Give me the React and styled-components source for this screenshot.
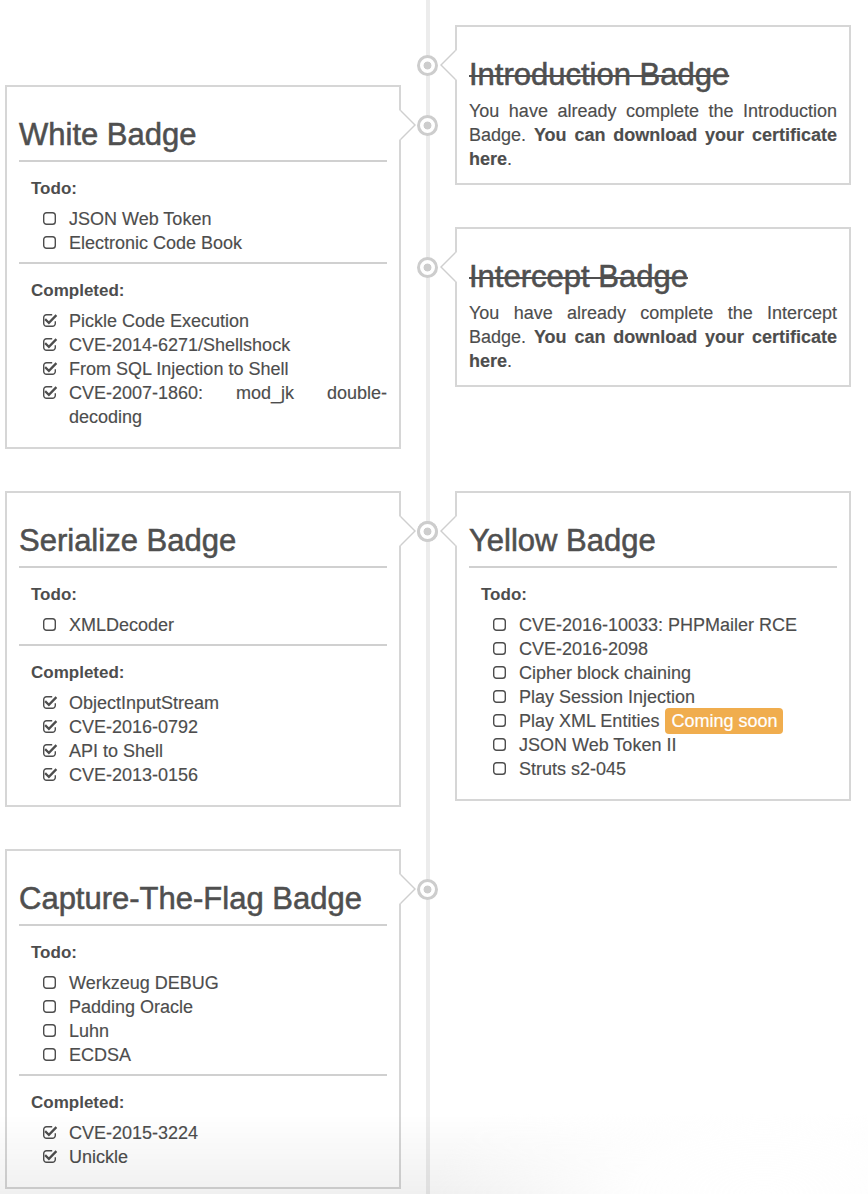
import React from "react";
import styled, { createGlobalStyle, css } from "styled-components";

const Global = createGlobalStyle`
  html, body { margin: 0; padding: 0; background: #fff; }
  body {
    font-family: "Liberation Sans", Arial, Helvetica, sans-serif;
    color: #4d4d4d;
  }
`;

const Page = styled.main`
  display: grid;
  grid-template-columns: 396px 54px 396px;
  align-items: start;
  padding-left: 5px;
  min-height: 100vh;
  box-sizing: border-box;
`;

const Column = styled.div`
  display: flex;
  flex-direction: column;
  gap: 42px;
  padding-top: ${(p) => p.$top}px;
  padding-bottom: 5px;
`;

const Spine = styled.div`
  align-self: stretch;
  background: linear-gradient(
    to right,
    transparent 25px,
    #ececec 25px,
    #ececec 29px,
    transparent 29px
  );
`;

const arrowLeftSide = css`
  &::before {
    content: "";
    position: absolute;
    top: 23px;
    right: -17px;
    border-top: 15px solid transparent;
    border-bottom: 15px solid transparent;
    border-left: 15px solid #cfcfcf;
  }
  &::after {
    content: "";
    position: absolute;
    top: 23px;
    right: -15px;
    border-top: 15px solid transparent;
    border-bottom: 15px solid transparent;
    border-left: 15px solid #fff;
  }
`;

const arrowRightSide = css`
  &::before {
    content: "";
    position: absolute;
    top: 23px;
    left: -17px;
    border-top: 15px solid transparent;
    border-bottom: 15px solid transparent;
    border-right: 15px solid #cfcfcf;
  }
  &::after {
    content: "";
    position: absolute;
    top: 23px;
    left: -15px;
    border-top: 15px solid transparent;
    border-bottom: 15px solid transparent;
    border-right: 15px solid #fff;
  }
`;

const Card = styled.article`
  position: relative;
  box-sizing: border-box;
  width: 396px;
  border: 2px solid #d6d6d6;
  background: #fff;
  padding: 31px 12px 11px;
  margin-top: ${(p) => p.$push || 0}px;
  ${(p) => (p.$side === "left" ? arrowLeftSide : arrowRightSide)}
`;

const Node = styled.span`
  position: absolute;
  top: 28px;
  ${(p) => (p.$side === "left" ? "right: -39px;" : "left: -40px;")}
  width: 21px;
  height: 21px;
  box-sizing: border-box;
  border-radius: 50%;
  border: 3px solid #cdcdcd;
  background: radial-gradient(circle at center, #cdcdcd 0 3.6px, #fff 4.3px);
  z-index: 2;
`;

const Title = styled.h2`
  margin: 0 0 ${(p) => (p.$done ? 7 : 0)}px;
  font-size: 31px;
  line-height: 34px;
  font-weight: 400;
  color: #4f4f4f;
  -webkit-text-stroke: 0.55px #4f4f4f;
  text-decoration: ${(p) => (p.$done ? "line-through" : "none")};
  text-decoration-thickness: 2px;
  ${(p) =>
    !p.$done &&
    css`
      padding-bottom: 8px;
      border-bottom: 2px solid #d0d0d0;
    `}
`;

const Paragraph = styled.p`
  margin: 0 0 1px;
  font-size: 18px;
  line-height: 24px;
  text-align: justify;
  -webkit-text-stroke: 0.15px #4d4d4d;
  b {
    font-weight: 700;
  }
`;

const Section = styled.section`
  padding: 15px 0 7px 12px;
  & + & {
    border-top: 2px solid #d0d0d0;
  }
`;

const SectionLabel = styled.h4`
  margin: 0 0 6px;
  font-size: 17px;
  line-height: 24px;
  font-weight: 700;
  color: #4d4d4d;
`;

const List = styled.ul`
  list-style: none;
  margin: 0;
  padding: 0 0 0 12px;
`;

const Item = styled.li`
  display: flex;
  align-items: flex-start;
  gap: 13px;
  font-size: 18px;
  line-height: 24px;
  -webkit-text-stroke: 0.15px #4d4d4d;
`;

const Box = styled.svg`
  flex: 0 0 13px;
  width: 13px;
  height: 13px;
  margin-top: 5px;
  overflow: visible;
`;

const ItemText = styled.span`
  flex: 1;
  text-align: justify;
`;

const Soon = styled.span`
  display: inline-block;
  vertical-align: top;
  margin: -1px 0 -1px 6px;
  padding: 1px 6px;
  line-height: 24px;
  border-radius: 4px;
  background: #f0ad4e;
  color: #fff;
  -webkit-text-stroke: 0.2px #fff;
`;

const Shade = styled.div`
  position: fixed;
  left: 0;
  right: 0;
  bottom: 0;
  height: 80px;
  pointer-events: none;
  background: radial-gradient(
      ellipse 330px 150px at 88% 100%,
      rgba(255, 255, 255, 1) 0,
      rgba(255, 255, 255, 0.9) 40%,
      rgba(255, 255, 255, 0) 100%
    ),
    linear-gradient(to bottom, rgba(0, 0, 0, 0), rgba(0, 0, 0, 0.06));
  z-index: 5;
`;

function Unchecked() {
  return (
    <Box viewBox="0 0 13 13">
      <rect
        x="0.7"
        y="0.7"
        width="11.6"
        height="11.6"
        rx="2.8"
        fill="none"
        stroke="#4d4d4d"
        strokeWidth="1.4"
      />
    </Box>
  );
}

function Checked() {
  return (
    <Box viewBox="0 0 13 13">
      <path
        d="M9.2 0.7 H3.5 A2.8 2.8 0 0 0 0.7 3.5 V9.5 A2.8 2.8 0 0 0 3.5 12.3 H9.5 A2.8 2.8 0 0 0 12.3 9.5 V7.2"
        fill="none"
        stroke="#4d4d4d"
        strokeWidth="1.4"
      />
      <path
        d="M3 6 L5.9 8.8 L12.6 2"
        fill="none"
        stroke="#4d4d4d"
        strokeWidth="2.3"
        strokeLinecap="square"
      />
    </Box>
  );
}

function TaskList({ label, items, done }) {
  return (
    <Section>
      <SectionLabel>{label}</SectionLabel>
      <List>
        {items.map((it) => (
          <Item key={typeof it === "string" ? it : it.name}>
            {done ? <Checked /> : <Unchecked />}
            <ItemText>
              {typeof it === "string" ? it : it.name}
              {it.soon && <Soon>Coming soon</Soon>}
            </ItemText>
          </Item>
        ))}
      </List>
    </Section>
  );
}

function BadgeCard({ side, title, todo, completed, push }) {
  return (
    <Card $side={side} $push={push}>
      <Node $side={side} />
      <Title>{title}</Title>
      {todo && todo.length > 0 && <TaskList label="Todo:" items={todo} />}
      {completed && completed.length > 0 && (
        <TaskList label="Completed:" items={completed} done />
      )}
    </Card>
  );
}

function DoneCard({ side, title, name }) {
  return (
    <Card $side={side}>
      <Node $side={side} />
      <Title $done>{title}</Title>
      <Paragraph>
        You have already complete the {name} Badge.{" "}
        <b>You can download your certificate here</b>.
      </Paragraph>
    </Card>
  );
}

export default function App() {
  return (
    <>
      <Global />
      <Page>
        <Column $top={85}>
          <BadgeCard
            side="left"
            title="White Badge"
            todo={["JSON Web Token", "Electronic Code Book"]}
            completed={[
              "Pickle Code Execution",
              "CVE-2014-6271/Shellshock",
              "From SQL Injection to Shell",
              "CVE-2007-1860: mod_jk double-decoding",
            ]}
          />
          <BadgeCard
            side="left"
            title="Serialize Badge"
            todo={["XMLDecoder"]}
            completed={[
              "ObjectInputStream",
              "CVE-2016-0792",
              "API to Shell",
              "CVE-2013-0156",
            ]}
          />
          <BadgeCard
            side="left"
            title="Capture-The-Flag Badge"
            todo={["Werkzeug DEBUG", "Padding Oracle", "Luhn", "ECDSA"]}
            completed={["CVE-2015-3224", "Unickle"]}
          />
        </Column>
        <Spine />
        <Column $top={25}>
          <DoneCard side="right" title="Introduction Badge" name="Introduction" />
          <DoneCard side="right" title="Intercept Badge" name="Intercept" />
          <BadgeCard
            side="right"
            push={62}
            title="Yellow Badge"
            todo={[
              "CVE-2016-10033: PHPMailer RCE",
              "CVE-2016-2098",
              "Cipher block chaining",
              "Play Session Injection",
              { name: "Play XML Entities", soon: true },
              "JSON Web Token II",
              "Struts s2-045",
            ]}
          />
        </Column>
      </Page>
      <Shade />
    </>
  );
}
